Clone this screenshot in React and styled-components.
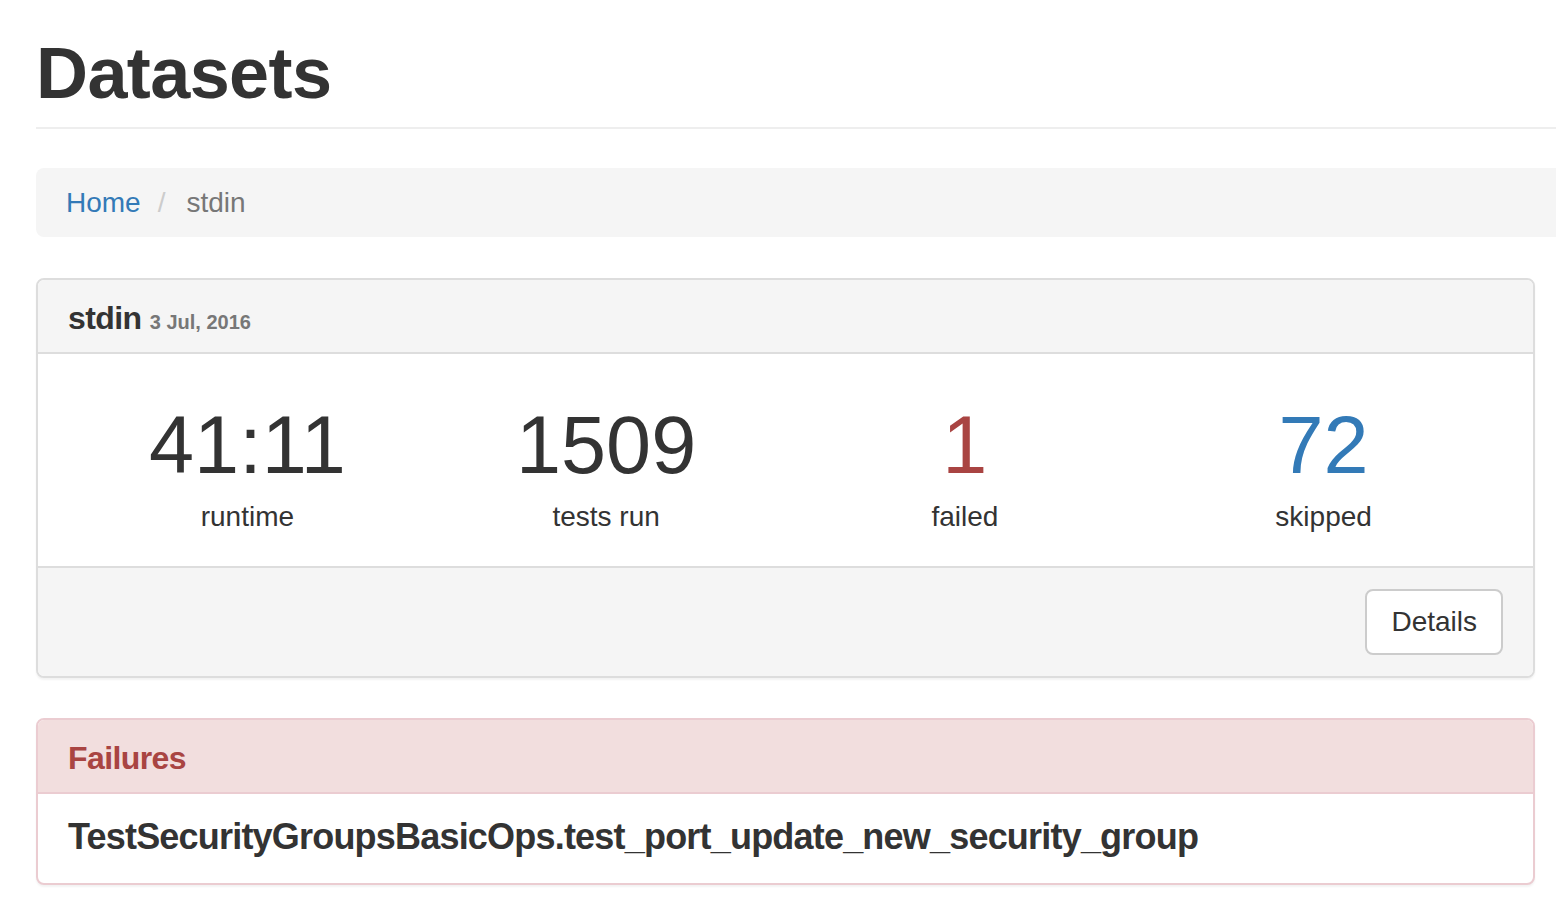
import React from 'react';
import styled, { createGlobalStyle } from 'styled-components';

const GlobalStyle = createGlobalStyle`
  html, body {
    margin: 0;
    padding: 0;
    background: #fff;
  }
  body {
    font-family: "Liberation Sans", Arial, sans-serif;
    font-size: 28px;
    color: #333;
    overflow-x: hidden;
  }
`;

const stats = [
  { value: '41:11', label: 'runtime' },
  { value: '1509', label: 'tests run' },
  { value: '1', label: 'failed', tone: 'danger' },
  { value: '72', label: 'skipped', tone: 'primary' },
];

export default function App() {
  return (
    <>
      <GlobalStyle />
      <Page>
        <PageHeader>
          <Title>Datasets</Title>
        </PageHeader>

        <Breadcrumb>
          <Crumb href="#">Home</Crumb>
          <Separator>/</Separator>
          <ActiveCrumb>stdin</ActiveCrumb>
        </Breadcrumb>

        <Panel>
          <PanelHeading>
            <PanelTitle>
              stdin <Small>3 Jul, 2016</Small>
            </PanelTitle>
          </PanelHeading>
          <StatsBody>
            {stats.map((s) => (
              <Stat key={s.label}>
                <StatValue tone={s.tone}>{s.value}</StatValue>
                <StatLabel>{s.label}</StatLabel>
              </Stat>
            ))}
          </StatsBody>
          <PanelFooter>
            <Button>Details</Button>
          </PanelFooter>
        </Panel>

        <Panel variant="danger">
          <PanelHeading variant="danger">
            <PanelTitle>Failures</PanelTitle>
          </PanelHeading>
          <FailureItem>TestSecurityGroupsBasicOps.test_port_update_new_security_group</FailureItem>
        </Panel>
      </Page>
    </>
  );
}

const Page = styled.div`
  padding: 0 0 40px 36px;
`;

const PageHeader = styled.div`
  padding-top: 34px;
  padding-bottom: 14px;
  border-bottom: 2px solid #eee;
  margin-right: -20px;
  margin-bottom: 39px;
`;

const Title = styled.h1`
  margin: 0;
  font-size: 72px;
  line-height: 79px;
  font-weight: 700;
  letter-spacing: -0.6px;
  color: #333;
`;

const Breadcrumb = styled.nav`
  display: flex;
  align-items: center;
  height: 69px;
  padding: 0 30px;
  margin-right: -20px;
  margin-bottom: 41px;
  background: #f5f5f5;
  border-radius: 8px;
  line-height: 38px;
`;

const Crumb = styled.a`
  color: #337ab7;
  text-decoration: none;
`;

const Separator = styled.span`
  color: #ccc;
  margin: 0 21px 0 17px;
`;

const ActiveCrumb = styled.span`
  color: #777;
`;

const Panel = styled.div`
  margin: 0 21px 40px 0;
  background: #fff;
  border: 2px solid ${(p) => (p.variant === 'danger' ? '#ebccd1' : '#ddd')};
  border-radius: 8px;
  box-shadow: 0 2px 2px rgba(0, 0, 0, 0.05);
  overflow: hidden;
`;

const PanelHeading = styled.div`
  padding: 22px 30px 18px;
  background: ${(p) => (p.variant === 'danger' ? '#f2dede' : '#f5f5f5')};
  color: ${(p) => (p.variant === 'danger' ? '#a94442' : '#333')};
  border-bottom: 2px solid ${(p) => (p.variant === 'danger' ? '#ebccd1' : '#ddd')};
`;

const PanelTitle = styled.h3`
  margin: 0;
  height: 32px;
  font-size: 32px;
  line-height: 32px;
  font-weight: 700;
  letter-spacing: -0.6px;
  color: inherit;
`;

const Small = styled.small`
  font-size: 20px;
  line-height: 0;
  font-weight: 700;
  letter-spacing: 0;
  color: #777;
`;

const StatsBody = styled.div`
  display: grid;
  grid-template-columns: repeat(4, 1fr);
  padding: 38px 30px 30px;
`;

const Stat = styled.div`
  text-align: center;
`;

const toneColor = {
  danger: '#a94442',
  primary: '#337ab7',
};

const StatValue = styled.div`
  font-size: 81px;
  line-height: 106px;
  color: ${(p) => toneColor[p.tone] || '#333'};
`;

const StatLabel = styled.div`
  font-size: 28px;
  line-height: 38px;
`;

const PanelFooter = styled.div`
  display: flex;
  justify-content: flex-end;
  padding: 21px 30px 21px;
  background: #f5f5f5;
  border-top: 2px solid #ddd;
`;

const Button = styled.button`
  height: 66px;
  padding: 0 24px;
  font-family: inherit;
  font-size: 28px;
  color: #333;
  background: #fff;
  border: 2px solid #ccc;
  border-radius: 8px;
  cursor: pointer;
`;

const FailureItem = styled.div`
  padding: 19px 30px 23px;
  font-size: 36px;
  line-height: 47px;
  font-weight: 700;
  letter-spacing: -0.8px;
`;
